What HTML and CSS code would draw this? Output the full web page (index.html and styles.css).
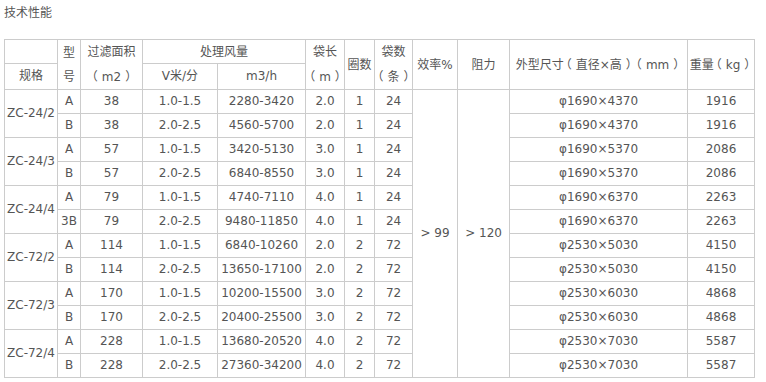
FILE: index.html
```html
<!DOCTYPE html>
<html>
    <head>
        <meta charset="UTF-8" />
        <title>技术性能</title>
        <link rel="stylesheet" href="styles.css">
    </head>

    <body>
        <div class="page">
            <p class="title">技术性能</p>
            <table class="spec">
                <colgroup>
                    <col class="c-spec">
                    <col class="c-type">
                    <col class="c-area">
                    <col class="c-speed">
                    <col class="c-flow">
                    <col class="c-len">
                    <col class="c-ring">
                    <col class="c-bags">
                    <col class="c-eff">
                    <col class="c-res">
                    <col class="c-size">
                    <col class="c-weight">
                </colgroup>
                <tr class="head-top">
                    <td></td>
                    <td rowspan="2" class="wrap">型号</td>
                    <td rowspan="2" class="wrap">过滤面积<br><span class="po">（</span>m2<span class="pc">）</span></td>
                    <td colspan="2">处理风量</td>
                    <td rowspan="2" class="wrap">袋长<br><span class="po">（</span>m<span class="pc">）</span></td>
                    <td rowspan="2">圈数</td>
                    <td rowspan="2" class="wrap">袋数<br><span class="po">（</span>条<span class="pc">）</span></td>
                    <td rowspan="2">效率%</td>
                    <td rowspan="2">阻力</td>
                    <td rowspan="2">外型尺寸<span class="po">（</span>直径×高<span class="pc">）</span><span class="po">（</span>mm<span class="pc">）</span></td>
                    <td rowspan="2">重量<span class="po">（</span>kg<span class="pc">）</span></td>
                </tr>
                <tr class="head-bottom">
                    <td>规格</td>
                    <td>V米/分</td>
                    <td>m3/h</td>
                </tr>
                <tr>
                    <td rowspan="2">ZC-24/2</td>
                    <td>A</td><td>38</td><td>1.0-1.5</td><td>2280-3420</td><td>2.0</td><td>1</td><td>24</td>
                    <td rowspan="12">&gt; 99</td>
                    <td rowspan="12">&gt; 120</td>
                    <td>φ1690×4370</td><td>1916</td>
                </tr>
                <tr>
                    <td>B</td><td>38</td><td>2.0-2.5</td><td>4560-5700</td><td>2.0</td><td>1</td><td>24</td>
                    <td>φ1690×4370</td><td>1916</td>
                </tr>
                <tr>
                    <td rowspan="2">ZC-24/3</td>
                    <td>A</td><td>57</td><td>1.0-1.5</td><td>3420-5130</td><td>3.0</td><td>1</td><td>24</td>
                    <td>φ1690×5370</td><td>2086</td>
                </tr>
                <tr>
                    <td>B</td><td>57</td><td>2.0-2.5</td><td>6840-8550</td><td>3.0</td><td>1</td><td>24</td>
                    <td>φ1690×5370</td><td>2086</td>
                </tr>
                <tr>
                    <td rowspan="2">ZC-24/4</td>
                    <td>A</td><td>79</td><td>1.0-1.5</td><td>4740-7110</td><td>4.0</td><td>1</td><td>24</td>
                    <td>φ1690×6370</td><td>2263</td>
                </tr>
                <tr>
                    <td>3B</td><td>79</td><td>2.0-2.5</td><td>9480-11850</td><td>4.0</td><td>1</td><td>24</td>
                    <td>φ1690×6370</td><td>2263</td>
                </tr>
                <tr>
                    <td rowspan="2">ZC-72/2</td>
                    <td>A</td><td>114</td><td>1.0-1.5</td><td>6840-10260</td><td>2.0</td><td>2</td><td>72</td>
                    <td>φ2530×5030</td><td>4150</td>
                </tr>
                <tr>
                    <td>B</td><td>114</td><td>2.0-2.5</td><td>13650-17100</td><td>2.0</td><td>2</td><td>72</td>
                    <td>φ2530×5030</td><td>4150</td>
                </tr>
                <tr>
                    <td rowspan="2">ZC-72/3</td>
                    <td>A</td><td>170</td><td>1.0-1.5</td><td>10200-15500</td><td>3.0</td><td>2</td><td>72</td>
                    <td>φ2530×6030</td><td>4868</td>
                </tr>
                <tr>
                    <td>B</td><td>170</td><td>2.0-2.5</td><td>20400-25500</td><td>3.0</td><td>2</td><td>72</td>
                    <td>φ2530×6030</td><td>4868</td>
                </tr>
                <tr>
                    <td rowspan="2">ZC-72/4</td>
                    <td>A</td><td>228</td><td>1.0-1.5</td><td>13680-20520</td><td>4.0</td><td>2</td><td>72</td>
                    <td>φ2530×7030</td><td>5587</td>
                </tr>
                <tr>
                    <td>B</td><td>228</td><td>2.0-2.5</td><td>27360-34200</td><td>4.0</td><td>2</td><td>72</td>
                    <td>φ2530×7030</td><td>5587</td>
                </tr>
            </table>
        </div>
    </body>
</html>
```

FILE: styles.css
```css
* {
    margin: 0;
    padding: 0;
    box-sizing: border-box;
}

body {
    background-color: #fff;
    color: #555;
    font-family: "DejaVu Sans", "Noto Sans CJK SC", sans-serif;
    font-size: 12px;
}

.page {
    padding: 4px;
}

.title {
    line-height: 18px;
}

.spec {
    margin-top: 17px;
    width: 750px;
    table-layout: fixed;
    border-collapse: collapse;
}

/* column widths, measured border to border */
.c-spec { width: 53px; }
.c-type { width: 23px; }
.c-area { width: 62px; }
.c-speed { width: 75px; }
.c-flow { width: 88px; }
.c-len { width: 39px; }
.c-ring { width: 30px; }
.c-bags { width: 38px; }
.c-eff { width: 45px; }
.c-res { width: 52px; }
.c-size { width: 178px; }
.c-weight { width: 67px; }

.spec td {
    border: 1px solid #ccc;
    text-align: center;
    vertical-align: middle;
    line-height: 23px;
    padding: 0;
    white-space: nowrap;
    text-spacing-trim: space-all;
}

.spec .head-top td {
    line-height: 22px;
}

.spec td.wrap {
    white-space: normal;
    line-height: 24px;
}

/* full-width brackets: centre the glyph in its em box, as the source font does */
.po,
.pc {
    font-family: "Noto Sans CJK SC", sans-serif;
    text-spacing-trim: space-all;
}

.po {
    margin: 0 4px 0 -4px;
}

.pc {
    margin: 0 -4px 0 4px;
}
```
